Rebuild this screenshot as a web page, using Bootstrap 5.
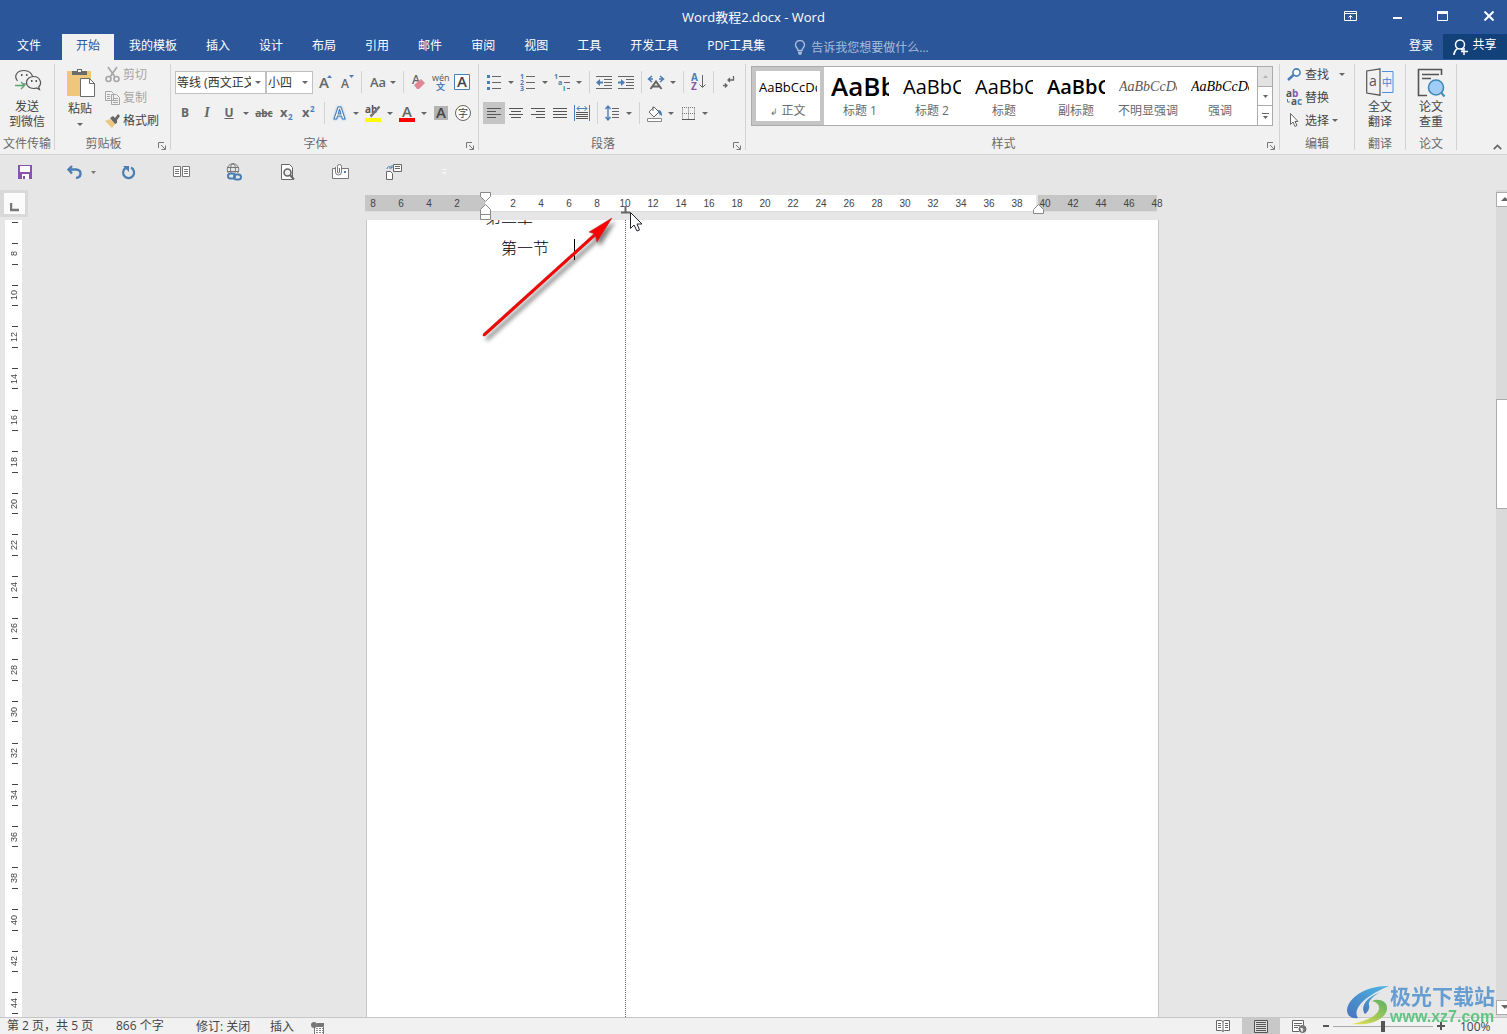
<!DOCTYPE html>
<html lang="zh-CN">
<head>
<meta charset="utf-8">
<meta name="viewport" content="width=device-width, initial-scale=1">
<title>Word教程2.docx - Word</title>
<link href="https://cdn.jsdelivr.net/npm/bootstrap@5.3.0/dist/css/bootstrap.min.css" rel="stylesheet">
<style>
:root{--blue:#2b579a;--ink:#444;--grey:#6a6a6a;--icon:#666;--acc:#4a7eb5;--line:#d2d2d2}
body{font:12px/16px "Open Sans","Noto Sans CJK SC",sans-serif;color:var(--ink);background:#e6e6e6;overflow:hidden}
button{border:0;background:none;padding:0;color:inherit;font:inherit}
svg{display:block;flex:none}
.ib svg,.smallbtn svg,.bigbtn svg{overflow:visible}
.titlebar{height:34px;background:var(--blue);color:#fff}
.titletext{font-size:13px}
.winbtns{right:0;top:0}
.winbtns button{width:46px;height:32px;padding-left:9px}
.tabsbar{height:26px;background:var(--blue);gap:1px;padding-left:3px}
.tabsbar a{color:#fff;text-decoration:none;padding:0 14px;line-height:24px;height:26px;white-space:nowrap}
.tabsbar a.filetab{margin-right:6px}
.tabsbar a.signin{padding-right:9px}
.tabsbar a.current{background:#f1f1f1;color:var(--blue)}
.tellme{margin-left:14px;color:#a9bcd9;gap:5px}
.tellme input{border:0;background:none;color:#fff;width:150px;padding:0;height:24px;outline:0}
.tellme input::placeholder{color:#a9bcd9;opacity:1}
.tabsbar .sharebtn{background:#124078;width:64px;height:25px;color:#fff;gap:4px;padding-bottom:3px}
.ribbon{height:95px;background:#f1f1f1;border-bottom:1px solid var(--line);padding:4px 0}
.rgroup{border-right:1px solid var(--line);position:relative}
.rlabel{color:var(--grey);text-align:center;line-height:14px;height:13px;margin-top:auto;white-space:nowrap}
.launcher{position:absolute;right:4px;bottom:0}
.rrow{height:31px}
.ib{width:22px;height:22px;display:inline-flex;align-items:center;justify-content:center;color:var(--icon);flex:none}
.cb{width:12px;height:22px;display:inline-flex;align-items:center;justify-content:center;flex:none}
.cb::after,.caret::after{content:"";border:3px solid transparent;border-top-color:#666;border-bottom:0}
.vsep{width:8px;height:22px;flex:none;display:flex;justify-content:center}
.vsep::after{content:"";width:1px;height:100%;background:var(--line)}
.ib.on{background:#c5c5c5;width:22px}
.rsel{appearance:none;height:23px;border:1px solid #c0c0c0;border-radius:0;padding:1px 14px 0 1px;color:#333;font-size:12px;background:#fff url("data:image/svg+xml,%3Csvg xmlns='http://www.w3.org/2000/svg' width='6' height='3'%3E%3Cpath d='M0 0h6L3 3z' fill='%23666'/%3E%3C/svg%3E") no-repeat right 4px center}
.selfont{width:91px}.selsize{width:47px}
.bigbtn{line-height:15px;display:flex;flex-direction:column;align-items:center;gap:5px}
.bigbtn.paste{width:50px;padding-top:3px;gap:3px}
.smallbtn{display:flex;align-items:center;gap:3px;height:23px;line-height:14px;padding-bottom:2px;white-space:nowrap}
.smallbtn.off{color:#a6a6a6}
.gallery{border:1px solid #ababab;background:#fff;height:60px;margin:2px 6px 0 5px}
.sitem{width:72px;height:58px;border:4px solid transparent;color:var(--grey);flex:none;line-height:16px;padding:0 3px}
.sitem.picked{border-color:#c5c5c5}
.sitem .pv{display:block;overflow:hidden;white-space:nowrap;color:#000;height:30px;line-height:28px;text-align:left;width:58px}
.sitem .nm{display:block;white-space:nowrap;margin:0 -4px}
.pv1{font-size:13px}.sitem .pv2{font-size:26px;font-weight:600;line-height:26px}.pv3{font-size:20px}.pv4{font-size:20px;font-weight:600}
.pv5{font:italic 14px/28px "Liberation Serif",serif}
.sitem .pvg{color:#595959}
.gscroll{width:15px;border-left:1px solid #ababab}
.gscroll button{flex:1;border-bottom:1px solid #ababab;display:flex;align-items:center;justify-content:center}
.gscroll button:first-child{background:#e3e3e3}.gscroll button:last-child{border:0}
.qat{height:35px}
.qat button{width:53px;height:34px;display:flex;align-items:center;justify-content:center}
.qat .undo{width:52px;padding-left:16px;justify-content:start}
.leftcol{width:28px}
.tabsel{width:28px;height:27px;border:3px solid #d9d9d9;border-left-width:4px;background:#fbfbfb;display:flex;align-items:end;justify-content:center}
.vruler{width:17px;margin:3px 0 0 5px;background:#fff;overflow:hidden;font:9px/10px "Liberation Sans",sans-serif;position:relative}
.vruler .cells{margin-bottom:-7px;padding-top:2px}
.vruler .tick{width:6px;height:1px;background:#444;flex:none;margin-left:2px}
.vruler .cell{flex:1;min-height:0;padding:10px 0}
.vruler .cell b{writing-mode:vertical-rl;transform:rotate(180deg);font-weight:400}
.docwrap{width:794px;position:relative}
.hruler{height:17px;margin:5px 2px 8px 0;background:linear-gradient(90deg,#c6c6c6 120px,#fff 120px,#fff 671px,#e6e6e6 671px,#e6e6e6 673px,#c6c6c6 673px);border-bottom:1px solid #dcdcdc;font:10px/17px "Liberation Sans",sans-serif}
.hruler span{width:28px;text-align:center;flex:none}
.hruler span:first-child{margin-left:-6px}
.sheet{background:#fff;margin-left:1px;border:solid #c6c6c6;border-width:0 1px;overflow:hidden;color:#000;font-size:16px;line-height:31px;font-family:"Noto Sans CJK SC",sans-serif;font-weight:300}
.sheet p{margin:0 0 0 118px}
.sheet .p1{margin-top:-19px}
.sheet .p2{text-indent:16px}
.overlay{left:0;top:0;pointer-events:none}
.tabguide{left:260px;top:30px;bottom:0;border-left:1px dotted #666}
.vscroll{width:11px;background:#dadada;padding:2px 0;overflow:hidden}
.vscroll button{width:17px;height:15px;background:#fff;border:1px solid #ababab;display:flex;align-items:center;justify-content:center}
.vscroll .thumb{height:110px;width:17px;background:#fff;border:1px solid #ababab}
.statusbar{height:17px;background:#f1f1f1;border-top:1px solid #c6c6c6;white-space:nowrap;line-height:18px}
.statusbar button{height:16px;line-height:18px}
.viewbtn{width:38px;display:flex;justify-content:center;align-items:center}
.viewbtn.on{background:#c8c8c8}
.zoomrange{appearance:none;width:100px;height:16px;background:linear-gradient(#a9a9a9,#a9a9a9) no-repeat center/100% 1px;margin:0}
.zoomrange::-webkit-slider-thumb{appearance:none;width:4px;height:11px;background:#555}
.wmark{right:7px;bottom:3px;width:154px;height:48px;pointer-events:none;opacity:.9}
.wmark .w1{font:700 21px/24px "Noto Sans CJK SC",sans-serif;color:#5a96cf}
.wmark .w2{font:700 16px/20px "Liberation Sans",sans-serif;color:#55c078}
</style>
</head>
<body class="vh-100 d-flex flex-column">
<header>
 <div class="titlebar position-relative d-flex align-items-center justify-content-center">
  <div class="titletext">Word教程2.docx - Word</div>
  <div class="winbtns position-absolute d-flex">
   <button class="d-flex align-items-center justify-content-center" aria-label="功能区显示选项"><svg width="13" height="10" fill="none" stroke="#fff"><path d="M.5.5h12v9H.5zM.5 2.500h12M6.500 8.500V4.500M4.500 6.500l2-2 2 2"/></svg></button>
   <button class="d-flex align-items-center justify-content-center" aria-label="最小化"><svg width="10" height="10"><path d="M1 6h9v2H1z" fill="#fff"/></svg></button>
   <button class="d-flex align-items-center justify-content-center" aria-label="最大化"><svg width="11" height="10"><path d="M.5.5h10v9H.5z" fill="none" stroke="#fff"/><path d="M0 0h11v3H0z" fill="#fff"/></svg></button>
   <button class="d-flex align-items-center justify-content-center" aria-label="关闭"><svg width="10" height="10" stroke="#fff" stroke-width="2"><path d="M.5.5l9 9M9.500.5l-9 9"/></svg></button>
  </div>
 </div>
 <nav class="tabsbar d-flex">
  <a class="filetab" href="#">文件</a><a class="current" href="#">开始</a><a href="#">我的模板</a><a href="#">插入</a><a href="#">设计</a><a href="#">布局</a><a href="#">引用</a><a href="#">邮件</a><a href="#">审阅</a><a href="#">视图</a><a href="#">工具</a><a href="#">开发工具</a><a href="#">PDF工具集</a>
  <label class="tellme d-flex align-items-center"><svg width="12" height="15" fill="none" stroke="#a9bcd9" stroke-width="1.400"><path d="M4 10.500C4 8 1.500 7.500 1.500 5a4.500 4.500 0 019 0c0 2.500-2.500 3-2.500 5.500zM4 12.500h4M4.500 14h3"/></svg><input type="text" placeholder="告诉我您想要做什么..." aria-label="告诉我您想要做什么"></label>
  <a class="signin ms-auto" href="#">登录</a>
  <button class="sharebtn d-flex align-items-center justify-content-center"><svg class="mt-1" width="15" height="16" fill="none" stroke="#fff" stroke-width="1.500"><circle cx="7" cy="5.500" r="4.500"/><path d="M.8 16c.3-3 1.500-5 3.700-6.500M8 10l2 1M11 9v7M8 12.500h7"/></svg>共享</button>
 </nav>
</header>

<section class="ribbon d-flex">
 <div class="rgroup d-flex flex-column" style="width:55px">
  <button class="bigbtn mt-1"><svg width="27" height="26" viewBox="0 0 27 26" fill="none" stroke="#555" stroke-width="1.200"><path d="M13 16H9M3.500 13C-1 7 4 2.500 10 2.500c5 0 8 3 8.500 6M19.500 8.500c-4 0-7 2.500-7 6s3 6 7 6c1 0 2-.2 3-.5l3 1.500-.8-2.700c4-4 1-10.300-5.200-10.300z"/><path d="M7 7h1.500M12 7h1.500M17 13h1.500M21.500 13H23" stroke-width="2"/><path d="M1 17.500h9M7 14l3.500 3.500L7 21" stroke="#58a86c" stroke-width="1.400"/></svg><span>发送<br>到微信</span></button>
  <div class="rlabel">文件传输</div>
 </div>
 <div class="rgroup d-flex flex-column" style="width:116px">
  <div class="d-flex">
   <button class="bigbtn paste"><svg width="29" height="31"><path d="M1 4h24v25H1z" fill="#eec77d"/><path d="M6 4h5V2h5v2h5v4H6z" fill="#6b6b6b"/><path d="M12 3h3v2h-3z" fill="#f1f1f1"/><path d="M14.500 11.500h9l5 5v13h-14z" fill="#fff" stroke="#6b6b6b"/><path d="M23.500 11.500v5h5" fill="none" stroke="#6b6b6b"/></svg><span>粘贴</span><span class="caret d-flex pt-1"></span></button>
   <div>
    <button class="smallbtn off"><svg width="15" height="16" fill="none" stroke="#a6a6a6" stroke-width="1.600"><path d="M3 0l7 10M12 0L5 10"/><circle cx="3.500" cy="12" r="2.500"/><circle cx="11.500" cy="12" r="2.500"/></svg>剪切</button>
    <button class="smallbtn off"><svg width="15" height="14" fill="#f1f1f1" stroke="#a6a6a6"><path d="M.5.5h6l2 2v7h-8zM6.500 3.500h5l3 3v7h-8zM2 3.500h3M2 5.500h3M2 7.500h3M8 7.500h5M8 9.500h5M8 11.500h5"/></svg>复制</button>
    <button class="smallbtn"><svg width="15" height="14"><path d="M0 7l5-2 5 5-3 4z" fill="#eec77d"/><path d="M5 4l3-2 2 2 3-4 2 2-3 4 0 3-2 1z" fill="#666"/></svg>格式刷</button>
   </div>
  </div>
  <div class="rlabel" style="padding-right:18px">剪贴板</div>
  <button class="launcher" aria-label="剪贴板设置"><svg width="8" height="8" fill="none" stroke="#777"><path d="M.5 6V.5H6M3 3l4 4M7.500 3.500v4h-4"/></svg></button>
 </div>
 <div class="rgroup d-flex flex-column" style="width:308px">
  <div class="rrow d-flex align-items-center mt-1" style="height:28px;padding-left:4px">
   <select class="rsel selfont" aria-label="字体"><option>等线 (西文正文)</option></select><select class="rsel selsize" aria-label="字号"><option>小四</option></select>
   <button class="ib" aria-label="增大字号"><svg width="15" height="16"><text x="2" y="14" font-size="15" fill="#666" font-weight="600">A</text><path d="M10 4l2.500-3L15 4z" fill="#4a7eb5"/></svg></button>
   <button class="ib" aria-label="减小字号"><svg width="15" height="16"><text x="2" y="14" font-size="12" fill="#666" font-weight="600">A</text><path d="M10 1l2.500 3L15 1z" fill="#4a7eb5"/></svg></button>
   <span class="vsep"></span>
   <button class="d-flex align-items-center" style="width:34px;color:#666"><span class="ps-1" style="font-size:13px;font-weight:600;width:22px">Aa</span><span class="cb"></span></button>
   <span class="vsep"></span>
   <button class="ib" aria-label="清除格式"><svg width="16" height="16"><text x="2" y="10" font-size="12" fill="#666" font-weight="600">A</text><path d="M4 11l7-6 4 4-6 6H7z" fill="#e28594"/></svg></button>
   <button class="ib" aria-label="拼音指南"><svg width="16" height="18"><text x="0" y="8" font-size="9" fill="#555">wén</text><text x="4" y="17" font-size="9" font-weight="700" fill="#4a7eb5">文</text></svg></button>
   <button class="ib" aria-label="字符边框"><svg width="16" height="16"><path d="M.5.5h15v15H.5z" fill="#fff" stroke="#4a7eb5"/><text x="3" y="13" font-size="15" font-weight="600" fill="#444">A</text></svg></button>
  </div>
  <div class="rrow d-flex align-items-center" style="height:34px;padding-left:3px">
   <button class="ib fw-bold">B</button><button class="ib fw-bold fst-italic" style="font-family:'Liberation Serif',serif;font-size:14px">I</button><button class="ib fw-bold text-decoration-underline">U</button><button class="cb" aria-label="下划线样式"></button>
   <button class="ib fw-bold text-decoration-line-through" style="font-size:10px;width:24px">abc</button>
   <button class="ib" aria-label="下标"><svg width="16" height="16"><text x="1" y="12" font-size="13" font-weight="700" fill="#666">x</text><text x="9" y="15" font-size="8" font-weight="700" fill="#4a7eb5">2</text></svg></button>
   <button class="ib" aria-label="上标"><svg width="16" height="16"><text x="1" y="12" font-size="13" font-weight="700" fill="#666">x</text><text x="9" y="7" font-size="8" font-weight="700" fill="#4a7eb5">2</text></svg></button>
   <span class="vsep"></span>
   <button class="ib" aria-label="文本效果"><svg width="16" height="16"><text x="3" y="14" font-size="16" font-weight="700" fill="#fff" stroke="#4a7eb5" stroke-width="1" style="filter:drop-shadow(0 0 1px #7fb2e6)">A</text></svg></button><button class="cb" aria-label="文本效果选项"></button>
   <button class="ib" aria-label="突出显示"><svg width="18" height="18"><text x="1" y="9" font-size="10" font-weight="700" fill="#555">ab</text><path d="M15.500 2.500l-7 8-2 2" stroke="#777" stroke-width="2.500" fill="none"/><path d="M1 14h16v4H1z" fill="#ff0"/></svg></button><button class="cb" aria-label="突出显示颜色"></button>
   <button class="ib" aria-label="字体颜色"><svg width="18" height="18"><text x="4" y="13" font-size="15" font-weight="600" fill="#666">A</text><path d="M1 14h16v4H1z" fill="#f00"/></svg></button><button class="cb" aria-label="选择字体颜色"></button>
   <button class="ib" aria-label="字符底纹"><svg width="14" height="14"><path d="M0 0h14v14H0z" fill="#b3b3b3"/><text x="2" y="12" font-size="15" font-weight="600" fill="#444">A</text></svg></button>
   <button class="ib" aria-label="带圈字符"><svg width="16" height="16"><circle cx="8" cy="8" r="7.500" fill="#fff" stroke="#666"/><text x="3" y="12" font-size="10" fill="#444">字</text></svg></button>
  </div>
  <div class="rlabel" style="padding-right:18px">字体</div>
  <button class="launcher" aria-label="字体设置"><svg width="8" height="8" fill="none" stroke="#777"><path d="M.5 6V.5H6M3 3l4 4M7.500 3.500v4h-4"/></svg></button>
 </div>
 <div class="rgroup d-flex flex-column" style="width:267px">
  <div class="rrow d-flex align-items-center mt-1 ps-1" style="height:28px">
   <button class="ib" aria-label="项目符号"><svg width="16" height="16"><path d="M1 1h3v3H1zM1 7h3v3H1zM1 13h3v3H1z" fill="#4a7eb5"/><path d="M6 2.500h9M6 8.500h9M6 14.500h9" stroke="#666"/></svg></button><button class="cb" aria-label="项目符号库"></button>
   <button class="ib" aria-label="编号"><svg width="16" height="17"><g font-size="7" font-weight="700" fill="#4a7eb5"><text x="0" y="5">1</text><text x="0" y="11">2</text><text x="0" y="17">3</text></g><path d="M6 2.500h9M6 8.500h9M6 14.500h9" stroke="#666"/></svg></button><button class="cb" aria-label="编号库"></button>
   <button class="ib" aria-label="多级列表"><svg width="18" height="17"><g font-size="7" font-weight="700" fill="#4a7eb5"><text x="1" y="5">1</text><text x="5" y="11">a</text><text x="10" y="17">i</text></g><path d="M6 2.500h11M11 8.500h6M14 14.500h3" stroke="#666"/></svg></button><button class="cb" aria-label="多级列表库"></button>
   <span class="vsep"></span>
   <button class="ib" aria-label="减少缩进"><svg width="16" height="14"><path d="M0 1.500h16M8 4.500h8M8 7.500h8M8 10.500h8M0 13.500h16" stroke="#666"/><path d="M0 7.500l4-3.500v2.500h3v2H4V11z" fill="#4a7eb5"/></svg></button>
   <button class="ib" aria-label="增加缩进"><svg width="16" height="14"><path d="M0 1.500h16M8 4.500h8M8 7.500h8M8 10.500h8M0 13.500h16" stroke="#666"/><path d="M7 7.500L3 4v2.500H0v2h3V11z" fill="#4a7eb5"/></svg></button>
   <span class="vsep"></span>
   <button class="ib" aria-label="中文版式"><svg width="18" height="15"><path d="M3.500 14L9 6.500 14.500 14M5.500 11.500h7" stroke="#666" stroke-width="2" fill="none"/><path d="M5 1L1.500 4 5 7M2 4h4M13 1l3.500 3L13 7M16 4h-4" stroke="#4a7eb5" stroke-width="1.500" fill="none"/></svg></button><button class="cb" aria-label="中文版式选项"></button>
   <span class="vsep"></span>
   <button class="ib" aria-label="排序"><svg width="16" height="18"><text x="1" y="8" font-size="10" font-weight="700" fill="#4a7eb5">A</text><text x="1" y="17" font-size="10" font-weight="700" fill="#8a53ad">Z</text><path d="M12.500 2v12M9.500 11.500l3 3 3-3" fill="none" stroke="#666"/></svg></button>
   <span class="vsep"></span>
   <button class="ib" aria-label="显示编辑标记"><svg width="12" height="14" fill="none" stroke="#666" stroke-width="1.300"><path d="M11.500 1v4H6M8 3L6 5l2 2M1 10.500h4M3 8.500l2 2-2 2"/></svg></button>
  </div>
  <div class="rrow d-flex align-items-center ps-1" style="height:34px">
   <button class="ib on" aria-label="左对齐"><svg width="14" height="10" stroke="#555"><path d="M0 .5h14M0 3.500h9M0 6.500h14M0 9.500h9"/></svg></button>
   <button class="ib" aria-label="居中"><svg width="14" height="10" stroke="#555"><path d="M0 .5h14M2 3.500h10M0 6.500h14M2 9.500h10"/></svg></button>
   <button class="ib" aria-label="右对齐"><svg width="14" height="10" stroke="#555"><path d="M0 .5h14M5 3.500h9M0 6.500h14M5 9.500h9"/></svg></button>
   <button class="ib" aria-label="两端对齐"><svg width="14" height="10" stroke="#555"><path d="M0 .5h14M0 3.500h14M0 6.500h14M0 9.500h14"/></svg></button>
   <button class="ib" aria-label="分散对齐"><svg width="16" height="16"><path d="M.5 0v16M15.500 0v16M3 3.500h10M5.500 1L3 3.500 5.500 6M10.500 1L13 3.500 10.500 6" stroke="#4a7eb5" fill="none"/><path d="M2 7.500h12M2 9.500h12M2 11.500h12M2 13.500h12" stroke="#555"/></svg></button>
   <span class="vsep"></span>
   <button class="ib" aria-label="行距"><svg width="14" height="16"><path d="M3 1v14M.5 4L3 1l2.500 3M.5 12L3 15l2.500-3" stroke="#4a7eb5" fill="none" stroke-width="1.400"/><path d="M7 3.500h7M7 6.500h7M7 9.500h7M7 12.500h7" stroke="#666"/></svg></button><button class="cb" aria-label="行距选项"></button>
   <span class="vsep"></span>
   <button class="ib" aria-label="底纹"><svg width="16" height="17"><path d="M3 7l5-5 5 5-5 5zM7 6V1.500" fill="#fff" stroke="#666"/><path d="M12 5c3 0 4 2 4 6l-3-2z" fill="#4a7eb5"/><path d="M1.500 13.500h14v3h-14z" fill="#fff" stroke="#888"/></svg></button><button class="cb" aria-label="底纹颜色"></button>
   <button class="ib" aria-label="边框"><svg width="13" height="13"><path d="M.5.5v12M6.500.5v12M12.500.5v12M0 .5h13M0 6.500h13" stroke="#777" stroke-dasharray="1 1"/><path d="M0 12.500h13" stroke="#555"/></svg></button><button class="cb" aria-label="边框选项"></button>
  </div>
  <div class="rlabel" style="padding-right:18px">段落</div>
  <button class="launcher" aria-label="段落设置"><svg width="8" height="8" fill="none" stroke="#777"><path d="M.5 6V.5H6M3 3l4 4M7.500 3.500v4h-4"/></svg></button>
 </div>
 <div class="rgroup d-flex flex-column flex-grow-1">
  <div class="gallery d-flex">
   <div class="d-flex flex-grow-1 overflow-hidden">
    <button class="sitem picked"><span class="pv pv1">AaBbCcDd</span><span class="nm"><small style="font-size:9px">↲</small> 正文</span></button>
    <button class="sitem"><span class="pv pv2">AaBb</span><span class="nm">标题 1</span></button>
    <button class="sitem"><span class="pv pv3">AaBbC</span><span class="nm">标题 2</span></button>
    <button class="sitem"><span class="pv pv3">AaBbC</span><span class="nm">标题</span></button>
    <button class="sitem"><span class="pv pv4">AaBbC</span><span class="nm">副标题</span></button>
    <button class="sitem"><span class="pv pv5 pvg">AaBbCcDd</span><span class="nm">不明显强调</span></button>
    <button class="sitem"><span class="pv pv5">AaBbCcDd</span><span class="nm">强调</span></button>
   </div>
   <div class="gscroll d-flex flex-column"><button aria-label="上一行"><svg width="5" height="3"><path d="M0 3h5L2.500 0z" fill="#b5b5b5"/></svg></button><button aria-label="下一行"><svg width="5" height="3"><path d="M0 0h5L2.500 3z" fill="#666"/></svg></button><button aria-label="更多样式"><svg width="7" height="6"><path d="M0 .5h7" stroke="#666"/><path d="M1 3h5L3.500 6z" fill="#666"/></svg></button></div>
  </div>
  <div class="rlabel" style="padding-right:18px">样式</div>
  <button class="launcher" aria-label="样式设置"><svg width="8" height="8" fill="none" stroke="#777"><path d="M.5 6V.5H6M3 3l4 4M7.500 3.500v4h-4"/></svg></button>
 </div>
 <div class="rgroup d-flex flex-column" style="width:75px;padding-left:6px">
  <button class="smallbtn"><svg width="16" height="13" fill="none" stroke="#4a7eb5"><circle cx="10.500" cy="4.500" r="3.600" fill="#fff" stroke-width="1.600"/><path d="M7.500 7L2 12" stroke-width="2.500"/></svg>查找<span class="cb ms-1"></span></button>
  <button class="smallbtn"><svg width="16" height="16" font-weight="700" font-size="10"><text x="0" y="7" fill="#555">a</text><text x="6" y="7" fill="#8a53ad">b</text><text x="5" y="15" fill="#555">a</text><text x="11" y="15" fill="#4a7eb5">c</text><path d="M1.500 9v3H4" stroke="#4a7eb5" fill="none"/></svg>替换</button>
  <button class="smallbtn"><svg width="16" height="15" fill="#fff" stroke="#666"><path d="M4.500.5v11l2.500-2.500 2 4.500 2-1-2-4h3z"/></svg>选择<span class="cb" style="margin-left:-3px"></span></button>
  <div class="rlabel" style="padding-right:6px">编辑</div>
 </div>
 <div class="rgroup d-flex flex-column" style="width:51px">
  <button class="bigbtn mt-1"><svg width="28" height="26"><path d="M14 .8L.7 3v22L14 27.200z" fill="none" stroke="#555" stroke-width="1.200"/><text x="3" y="18" font-size="14" fill="#555">a</text><path d="M16 3.500h11v21H16" fill="none" stroke="#4a90e2"/><text x="16" y="18" font-size="10" fill="#4a7ed0">中</text></svg><span>全文<br>翻译</span></button>
  <div class="rlabel">翻译</div>
 </div>
 <div class="rgroup d-flex flex-column" style="width:51px">
  <button class="bigbtn mt-1"><svg width="28" height="26" fill="none"><path d="M24.500 7V1.500h-23v26H10" stroke="#555" stroke-width="1.600"/><path d="M5 6.500h17M5 10.500h9" stroke="#555" stroke-width="1.500"/><circle cx="19" cy="19.500" r="7.500" fill="#a0cdf8" stroke="#4088b8" stroke-width="1.600"/><path d="M24.500 25l3 3.500" stroke="#4088b8" stroke-width="2"/></svg><span>论文<br>查重</span></button>
  <div class="rlabel">论文</div>
 </div>
 <div class="d-flex align-items-end justify-content-end" style="width:50px;padding-right:5px"><button aria-label="折叠功能区"><svg width="9" height="6" fill="none" stroke="#666" stroke-width="1.700"><path d="M.8 5.200l3.700-3.700 3.700 3.700"/></svg></button></div>
</section>

<div class="qat d-flex">
 <button style="width:50px" aria-label="保存"><svg width="14" height="14"><path d="M0 0h14v14H0z" fill="#8a53ad"/><path d="M2 1h10v6H2zM4 9h7v5H4z" fill="#fff"/><path d="M5 11h2v3H5z" fill="#8a53ad"/></svg></button>
 <button class="undo" aria-label="撤消"><svg width="36" height="14"><path d="M6 1L2.500 4.500 6 8.500M3 4.500h7c6 0 6 7.500 0 8.500" stroke="#4a7eb5" stroke-width="2.400" fill="none"/><path d="M25 6h5l-2.500 3z" fill="#777"/></svg></button>
 <button aria-label="重复"><svg width="15" height="15"><path d="M10 2.600A5.500 5.500 0 114.500 3" stroke="#4a7eb5" stroke-width="2.200" fill="none"/><path d="M2 1h6v6z" fill="#4a7eb5"/></svg></button>
 <button aria-label="双栏"><svg width="17" height="12" fill="#fff" stroke="#777"><path d="M.5.5h7v10h-7zM9.500.5h7v10h-7z"/><path d="M2 3.500h4M2 5.500h4M2 7.500h4M11 3.500h4M11 5.500h4M11 7.500h4"/></svg></button>
 <button aria-label="超链接"><svg width="17" height="18"><g fill="none" stroke="#777"><circle cx="7" cy="6.500" r="5.800"/><ellipse cx="7" cy="6.500" rx="2.500" ry="5.800"/><path d="M1 4.500h12M1 8.500h12"/></g><rect x="0" y="10" width="17" height="7" fill="#e6e6e6"/><g fill="none" stroke="#4a7eb5" stroke-width="2"><rect x="2" y="10.500" width="7" height="5" rx="2.500"/><rect x="8" y="11.500" width="7" height="5" rx="2.500"/></g></svg></button>
 <button aria-label="打印预览"><svg width="15" height="17" fill="#fff" stroke="#666"><path d="M1.500.5h8l3 3v12h-11z"/><circle cx="7.500" cy="8.500" r="3.500" fill="#eee" stroke-width="1.600"/><path d="M10 11l4 4.500" stroke-width="2"/></svg></button>
 <button aria-label="邮件附件"><svg width="17" height="16" fill="#fff" stroke="#777"><path d="M.5 4.500h16v10H.5z"/><path d="M3.500 3v5a3 3 0 006 0V2.500a2 2 0 00-4 0V8a1 1 0 002 0V4"/><path d="M12 7h2v2h-2z" fill="#4a7eb5" stroke="none"/></svg></button>
 <button aria-label="插入文档"><svg width="17" height="16" fill="#fff" stroke="#666"><path d="M8.500.5h8v7h-8zM10 2.500h5M10 4.500h5M1.500 7.500h4l2 2v6h-6z"/><path d="M2 5c0-3 4-3 5-1M7 1v3H4" fill="none" stroke="#4a7eb5"/></svg></button>
 <button style="width:48px" aria-label="自定义快速访问工具栏"><svg width="5" height="6"><path d="M0 .5h5" stroke="#f5f5f5"/><path d="M0 3h5L2.500 6z" fill="#f5f5f5"/></svg></button>
</div>

<main class="d-flex flex-grow-1 overflow-hidden">
 <div class="leftcol d-flex flex-column flex-shrink-0">
  <button class="tabsel" aria-label="制表符类型"><svg width="9" height="11"><path d="M1 0v7h8" fill="none" stroke="#777" stroke-width="2.500"/></svg></button>
  <div class="vruler flex-grow-1 d-flex flex-column"><div class="cells d-flex flex-column flex-grow-1 align-items-center" id="vcells"><i class="tick" style="margin-bottom:10px"></i></div></div>
 </div>
 <div class="flex-grow-1 d-flex justify-content-center">
  <div class="docwrap d-flex flex-column flex-shrink-0">
   <div class="hruler d-flex" id="hcells"></div>
   <article class="sheet flex-grow-1"><p class="p1">第二章</p><p class="p2">第一节</p></article>
   <div class="tabguide position-absolute"></div>
   <svg class="overlay position-absolute" width="794" height="160">
    <defs><filter id="sh" x="-20%" y="-20%" width="150%" height="150%"><feDropShadow dx="3" dy="4" stdDeviation="2" flood-opacity=".5"/></filter></defs>
    <g fill="#fff" stroke="#888"><path d="M115.500 2.500h10v4l-5 5-5-5zM115.500 24.500v-5l5-5 5 5v5zM115.500 24.500h10v5h-10zM668.500 23.500v-4l5-5 5 5v4z"/></g>
    <path d="M209.500 49v21" stroke="#000"/>
    <path d="M256 22.500h9M260.500 16v6" stroke="#666" stroke-width="2"/>
    <g filter="url(#sh)"><path d="M119 145L233 42" stroke="#a66" stroke-width="3.400"/><path d="M119 145L233 42" stroke="#f00" stroke-width="2.600" stroke-linecap="round"/><path d="M247 28l-23 14 6 2 2 8z" fill="#f00" stroke="#a33" stroke-width=".6"/></g>
    <path d="M265.500 22.500v16l3.500-3.500 3 6 2.500-1-2.500-6h5z" fill="#fff" stroke="#223"/>
   </svg>
  </div>
 </div>
 <div class="vscroll d-flex flex-column flex-shrink-0" aria-hidden="true">
  <button><svg width="8" height="5"><path d="M0 4h8L4 0z" fill="#666"/></svg></button><div style="flex:192"></div><div class="thumb"></div><div style="flex:492"></div><button><svg width="8" height="5"><path d="M0 0h8L4 4z" fill="#666"/></svg></button>
 </div>
</main>

<footer class="statusbar d-flex align-items-center">
 <span style="margin-left:7px;width:109px">第 2 页，共 5 页</span><span style="width:80px">866 个字</span><button style="width:74px" class="text-start">修订: 关闭</button><button style="width:41px" class="text-start">插入</button>
 <button aria-label="录制宏"><svg class="mt-1" width="14" height="13"><path d="M3.500 4.500h9v8h-9z" fill="#fff" stroke="#777"/><path d="M6 1h7v3H6z" fill="#777"/><circle cx="3" cy="3" r="3" fill="#777"/><path d="M5 6.500h7M5 8.500h7M5 10.500h7" stroke="#888" stroke-dasharray="2 1"/></svg></button>
 <button class="viewbtn ms-auto" aria-label="阅读视图"><svg width="14" height="12" fill="#fff" stroke="#666"><path d="M.5.5h5l1.500 1 1.500-1h5v10h-5l-1.500 1-1.500-1h-5zM7 1.500v10M2 3.500h3M2 5.500h3M2 7.500h3M9 3.500h3M9 5.500h3M9 7.500h3"/></svg></button>
 <button class="viewbtn on" aria-label="页面视图"><svg width="14" height="13" fill="#ddd" stroke="#555"><path d="M.5.5h13v12H.5zM2 2.500h10M2 4.500h10M2 6.500h10M2 8.500h10M2 10.500h10"/></svg></button>
 <button class="viewbtn" aria-label="Web 版式"><svg width="15" height="13" fill="#fff" stroke="#666"><path d="M7 11.500H.5V.5h11V5M2 3.500h8M2 5.500h6M2 7.500h4"/><circle cx="10.500" cy="9" r="3.500" fill="#777"/><path d="M8 8l3 1-1 3" stroke="#ddd"/></svg></button>
 <button style="width:15px" aria-label="缩小" class="d-flex align-items-center justify-content-center"><svg width="6" height="2"><path d="M0 0h6v2H0z" fill="#555"/></svg></button>
 <input class="zoomrange" type="range" min="0" max="100" value="50" aria-label="显示比例">
 <button style="width:16px" aria-label="放大" class="d-flex align-items-center justify-content-center"><svg width="8" height="8"><path d="M0 3h8v2H0zM3 0h2v8H3z" fill="#555"/></svg></button>
 <button style="width:58px;padding-left:11px" class="text-start">100%</button>
</footer>
<div class="wmark position-absolute d-flex">
 <svg width="44" height="46" viewBox="0 0 44 46"><defs><linearGradient id="g1" x1="0" y1="1" x2="1" y2="0"><stop offset="0" stop-color="#3668b8"/><stop offset="1" stop-color="#3db3e6"/></linearGradient><linearGradient id="g2" x1="0" y1="1" x2="1" y2="0"><stop offset="0" stop-color="#e8e040"/><stop offset="1" stop-color="#4cab55"/></linearGradient></defs><path d="M43 3C22 2 2 14 1 27c0 6 5 9 11 8-5-7 2-20 31-32z" fill="url(#g1)"/><path d="M35 9C20 14 14 24 19 31c3-2 5-6 4-9-1-3 3-9 12-13z" fill="url(#g1)"/><path d="M26 18c6-3 16 0 15 8-1 9-14 17-35 15 15-3 27-9 27-16 0-4-3-6-7-7z" fill="url(#g2)"/></svg>
 <div class="d-flex flex-column"><span class="w1 text-nowrap">极光下载站</span><span class="w2">www.xz7.com</span></div>
</div>
<script>
const h=document.getElementById('hcells');
for(let n=-8;n<=48;n+=2){const s=document.createElement('span');s.textContent=n?Math.abs(n):'';h.append(s)}
const v=document.getElementById('vcells');
for(let n=8;n<=44;n+=2){const c=document.createElement('div');c.className='cell d-flex flex-column align-items-center justify-content-between';c.innerHTML='<i class="tick"></i><b>'+n+'</b><i class="tick"></i>';v.append(c)}
</script>
<script src="https://cdn.jsdelivr.net/npm/bootstrap@5.3.0/dist/js/bootstrap.bundle.min.js"></script>
</body>
</html>
